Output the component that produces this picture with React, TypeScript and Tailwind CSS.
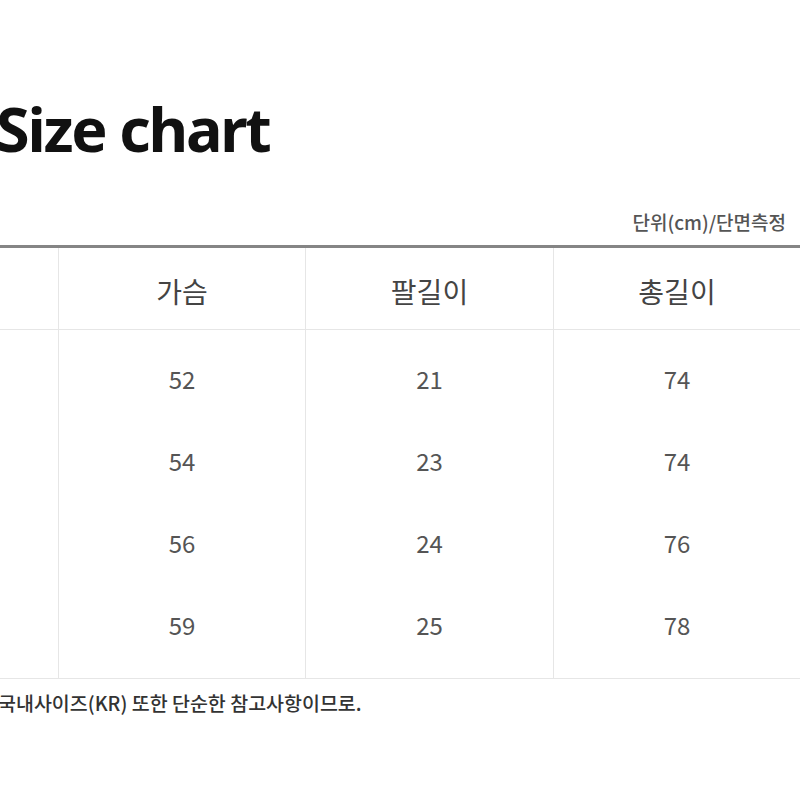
const font = { fontFamily: '"Noto Sans CJK KR", "Noto Sans", sans-serif' };

const headers = ["가슴", "팔길이", "총길이"];
const rows = [
  ["52", "21", "74"],
  ["54", "23", "74"],
  ["56", "24", "76"],
  ["59", "25", "78"],
];

export default function App() {
  return (
    <div className="h-[800px] w-[800px] overflow-hidden bg-white" style={font}>
      <h1
        className="-ml-[4px] mt-[89px] text-[61px] font-bold leading-[80px] tracking-[-2.2px] text-[#111]"
        style={{ fontFamily: '"Noto Sans", sans-serif' }}
      >
        Size chart
      </h1>

      <p className="mt-[41px] pr-[14px] text-right text-[19px] font-medium leading-[24px] text-[#555]">
        단위(cm)/단면측정
      </p>

      <div className="mt-[11px] border-t-[3px] border-[#858585]">
        <div className="grid grid-cols-[58px_247px_248px_1fr]">
          <div className="h-[82px] border-b border-[#e6e6e6]" />
          {headers.map((h) => (
            <div
              key={h}
              className="flex h-[82px] items-center justify-center border-b border-l border-[#e6e6e6] pt-[4px] text-[28px] text-[#444]"
            >
              {h}
            </div>
          ))}
        </div>
        <div className="grid grid-cols-[58px_247px_248px_1fr] border-b border-[#e6e6e6]">
          <div />
          {[0, 1, 2].map((c) => (
            <div key={c} className="border-l border-[#e6e6e6] pb-[12px] pt-[8px]">
              {rows.map((r, i) => (
                <div
                  key={i}
                  className="flex h-[82px] items-center justify-center text-[24px] text-[#555]"
                >
                  {r[c]}
                </div>
              ))}
            </div>
          ))}
        </div>
      </div>

      <p className="-ml-[2px] mt-[12px] text-[19.5px] font-medium leading-[24px] text-[#333]">
        국내사이즈(KR) 또한 단순한 참고사항이므로.
      </p>
    </div>
  );
}
